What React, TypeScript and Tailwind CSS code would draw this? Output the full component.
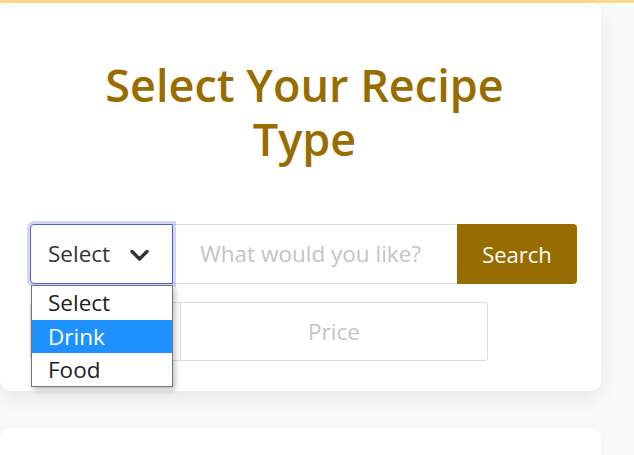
import React from "react";

export default function App() {
  return (
    <div className="h-[455px] bg-[#fafafa] font-['Open_Sans',sans-serif] overflow-hidden">
      <div className="h-[3px] bg-[#f7dc8c]" />
      <div className="w-[601px] rounded-[10px] bg-white shadow-[0_8px_24px_rgba(0,0,0,0.08)] pt-[55px] pb-[30px] px-[30px]">
        <h1 className="mx-auto w-[470px] pl-[8px] text-center text-[45px] font-semibold leading-[54px] text-[#996c00]">
          Select Your Recipe Type
        </h1>

        <div className="mt-[58px] flex h-[60px] w-[547px]">
          <div className="relative w-[143px] shrink-0">
            <div className="flex h-full items-center justify-between rounded-l-[4px] border border-[#4d5fd8] pl-[17px] pr-[22px] shadow-[0_0_0_3px_rgba(77,95,216,0.25)] text-[22.5px] text-[#333]">
              <span>Select</span>
              <svg width="21" height="14" viewBox="0 0 21 14" className="mt-[1px]">
                <path d="M3 3.5l7.5 7.5 7.5-7.5" fill="none" stroke="#333" strokeWidth="3.4" strokeLinecap="round" strokeLinejoin="round" />
              </svg>
            </div>
            <div className="absolute left-[1px] top-[61px] z-10 w-[142px] border border-[#767676] bg-white shadow-[2px_3px_6px_rgba(0,0,0,0.25)] text-[22.5px] text-[#222]">
              <div className="h-[34px] pl-[16px] leading-[34px]">Select</div>
              <div className="h-[33px] bg-[#1e90ff] pl-[16px] leading-[33px] text-white">Drink</div>
              <div className="h-[33px] pl-[16px] leading-[33px]">Food</div>
            </div>
          </div>
          <div className="flex flex-1 items-center border-y border-[#dcdcdc] pl-[27px] text-[22.5px] text-[#c4c4c4]">
            What would you like?
          </div>
          <button className="w-[120px] shrink-0 rounded-r-[4px] bg-[#996c00] text-[22px] text-white">
            Search
          </button>
        </div>

        <div className="mt-[18px] flex h-[59px] w-[458px]">
          <div className="w-[151px] shrink-0 rounded-l-[4px] border border-[#dcdcdc]" />
          <div className="flex flex-1 items-center justify-center rounded-r-[4px] border border-l-0 border-[#dcdcdc] text-[22.5px] text-[#c4c4c4]">
            Price
          </div>
        </div>
      </div>
      <div className="mt-[37px] h-[60px] w-[601px] rounded-[10px] bg-white shadow-[0_-2px_8px_rgba(0,0,0,0.03)]" />
    </div>
  );
}
